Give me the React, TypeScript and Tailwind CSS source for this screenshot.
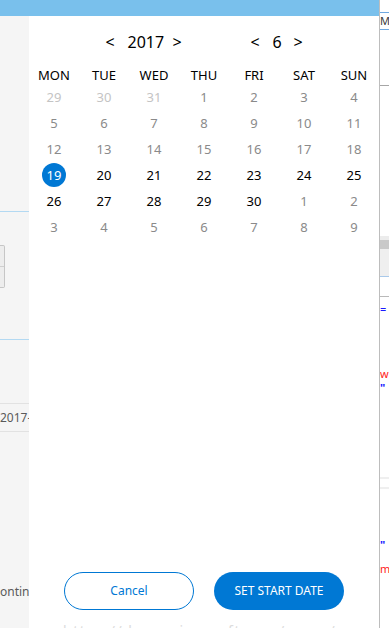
import React from "react";

type Kind = "prev" | "past" | "sel" | "cur" | "next";

const dayNames = ["MON", "TUE", "WED", "THU", "FRI", "SAT", "SUN"];

function buildDays(): { n: number; kind: Kind }[] {
  const days: { n: number; kind: Kind }[] = [];
  [29, 30, 31].forEach((n) => days.push({ n, kind: "prev" }));
  for (let n = 1; n <= 18; n++) days.push({ n, kind: "past" });
  days.push({ n: 19, kind: "sel" });
  for (let n = 20; n <= 30; n++) days.push({ n, kind: "cur" });
  for (let n = 1; n <= 9; n++) days.push({ n, kind: "next" });
  return days;
}

const kindClass: Record<Kind, string> = {
  prev: "text-[#c4c4c4]",
  past: "text-[#8a8a8a]",
  sel: "text-white",
  cur: "text-black",
  next: "text-[#8a8a8a]",
};

function NavGroup({ label, width }: { label: string; width: string }) {
  return (
    <div className="flex items-center gap-[13px] text-[16px] text-black h-6">
      <span className="w-[9px] text-center leading-none">&lt;</span>
      <span className={`${width} text-center leading-none`}>{label}</span>
      <span className="w-[9px] text-center leading-none">&gt;</span>
    </div>
  );
}

function Calendar() {
  const days = buildDays();
  return (
    <div className="flex flex-col">
      <div className="flex justify-center gap-[69px] pt-[14px]">
        <NavGroup label="2017" width="w-[32px]" />
        <NavGroup label="6" width="w-[8px]" />
      </div>
      <div className="grid grid-cols-7 mt-[13px] h-[17px] items-center text-[13px] text-black">
        {dayNames.map((d) => (
          <div key={d} className="text-center leading-none">
            {d}
          </div>
        ))}
      </div>
      <div className="grid grid-cols-7 text-[13px]">
        {days.map((d, i) => (
          <div key={i} className="h-[26px] flex items-center justify-center">
            {d.kind === "sel" ? (
              <span className="w-6 h-6 rounded-full bg-[#0078d4] text-white flex items-center justify-center leading-none">
                {d.n}
              </span>
            ) : (
              <span className={`${kindClass[d.kind]} leading-none`}>{d.n}</span>
            )}
          </div>
        ))}
      </div>
    </div>
  );
}

function LeftStrip() {
  return (
    <div className="w-[29px] bg-[#f5f5f5] flex flex-col text-[12px] text-[#5a5a5a] overflow-hidden">
      <div className="h-[195px]" />
      <div className="h-px bg-[#b3d9f2]" />
      <div className="h-[33px]" />
      <div className="h-[43px] w-[5px] border border-l-0 border-[#c6c6c6] bg-[#ededed] rounded-r-[2px] flex flex-col justify-center">
        <div className="h-px bg-[#cfcfcf]" />
      </div>
      <div className="h-[51px]" />
      <div className="h-px bg-[#b3d9f2]" />
      <div className="h-[63px]" />
      <div className="h-px bg-[#e2e2e2]" />
      <div className="h-[27px] flex items-center whitespace-nowrap">2017-0</div>
      <div className="h-px bg-[#e2e2e2]" />
      <div className="h-[154px]" />
      <div className="whitespace-nowrap leading-none">ontinc</div>
    </div>
  );
}

function RightStrip() {
  return (
    <div className="w-[9px] bg-white flex flex-col overflow-hidden text-[11px]">
      <div className="h-3" />
      <div className="h-px bg-[#6fa8e0]" />
      <div className="h-4 leading-4 text-[#3a3a3a] whitespace-nowrap">M</div>
      <div className="h-px bg-[#6fa8e0]" />
      <div className="h-[55px]" />
      <div className="h-px bg-[#a6a6a6]" />
      <div className="h-[150px]" />
      <div className="h-1 bg-[#ececec]" />
      <div className="h-[9px] bg-[#c9c9c9]" />
      <div className="h-[27px] bg-[#efefef]" />
      <div className="h-px bg-[#a9c9ea]" />
      <div className="h-[19px]" />
      <div className="h-px bg-[#b9b9b9]" />
      <div className="h-[6px]" />
      <div className="h-3 leading-3 text-[#1a1aff]">=</div>
      <div className="h-[54px]" />
      <div className="h-[10px] leading-[10px] text-[#ff1a1a]">w</div>
      <div className="h-[4px]" />
      <div className="h-[10px] leading-[10px] text-[#1a1aff] font-bold">"</div>
      <div className="h-[84px]" />
      <div className="h-[2px] bg-[#efefef]" />
      <div className="h-2" />
      <div className="h-[2px] bg-[#efefef]" />
      <div className="h-[50px]" />
      <div className="h-3 leading-3 text-[#1a1aff] font-bold">"</div>
      <div className="h-3" />
      <div className="h-3 leading-3 text-[#ff1a1a]">m</div>
    </div>
  );
}

export default function App() {
  return (
    <div
      className="w-[389px] h-[628px] overflow-hidden flex bg-white"
      style={{ fontFamily: '"Segoe UI", "Noto Sans", "Open Sans", sans-serif' }}
    >
      <div className="w-[379px] flex flex-col">
        <div className="h-4 bg-[#79c0ec]" />
        <div className="flex flex-1">
          <LeftStrip />
          <div className="w-[350px] bg-white flex flex-col">
            <Calendar />
            <div className="flex-1" />
            <div className="flex justify-center gap-5">
              <button className="w-[130px] h-[38px] rounded-full border border-[#0078d4] text-[#0078d4] text-[12px] bg-white">
                Cancel
              </button>
              <button className="w-[130px] h-[38px] rounded-full bg-[#0078d4] text-white text-[12px]">
                SET START DATE
              </button>
            </div>
            <div className="w-[282px] mx-auto h-[18px] mt-[12px] -mb-[12px] overflow-hidden text-[14px] leading-[18px] text-[#dcdcdc] whitespace-nowrap tracking-[1.5px]">
              https://docs.microsoft.com/en-us/uwp
            </div>
          </div>
        </div>
      </div>
      <div className="w-px bg-[#bdbdbd]" />
      <RightStrip />
    </div>
  );
}
